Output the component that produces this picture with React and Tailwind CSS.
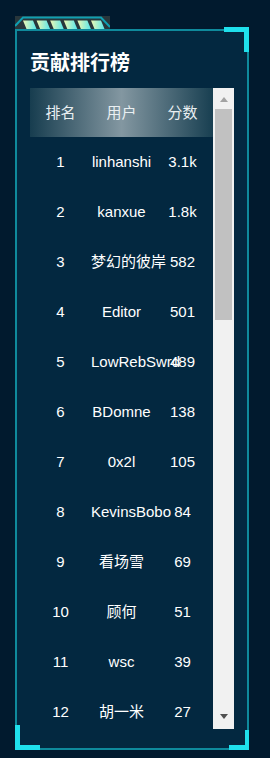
import React from 'react';

const rows = [
  { rank: 1, name: 'linhanshi', score: '3.1k' },
  { rank: 2, name: 'kanxue', score: '1.8k' },
  { rank: 3, name: '梦幻的彼岸', score: '582' },
  { rank: 4, name: 'Editor', score: '501' },
  { rank: 5, name: 'LowRebSwrd', score: '489' },
  { rank: 6, name: 'BDomne', score: '138' },
  { rank: 7, name: '0x2l', score: '105' },
  { rank: 8, name: 'KevinsBobo', score: '84' },
  { rank: 9, name: '看场雪', score: '69' },
  { rank: 10, name: '顾何', score: '51' },
  { rank: 11, name: 'wsc', score: '39' },
  { rank: 12, name: '胡一米', score: '27' },
];

// little striped tab sitting on top of the panel
const PanelTab = () => (
  <svg width="95" height="13" viewBox="0 0 95 13" className="block">
    <defs>
      <linearGradient id="tabStripes" x1="0" y1="0" x2="1" y2="0">
        <stop offset="0%" stopColor="#eef8b2" />
        <stop offset="100%" stopColor="#58e6ec" />
      </linearGradient>
    </defs>
    <rect x="0" y="0" width="95" height="13" fill="#28363b" />
    {[0, 1, 2, 3, 4, 5].map((k) => {
      const a = 8 + 13.6 * k;
      return (
        <polygon
          key={k}
          points={`${a},4.5 ${a + 10},4.5 ${a + 13.5},13 ${a + 3.5},13`}
          fill="url(#tabStripes)"
        />
      );
    })}
    <polyline points="0,10 8,1.5 86,1.5 95,11" fill="none" stroke="#0f9fb2" strokeWidth="2" />
  </svg>
);

const FakeScrollbar = () => (
  <div className="flex w-[21px] flex-col bg-[#f1f1f1]">
    <div className="flex h-[21px] items-end justify-center pb-[7px]">
      <div className="h-0 w-0 border-x-[4.5px] border-b-[5px] border-x-transparent border-b-[#a3a3a3]" />
    </div>
    <div className="flex-1 px-[2px]">
      <div className="h-[211px] bg-[#c1c1c1]" />
    </div>
    <div className="flex h-[20px] items-start justify-center pt-[5px]">
      <div className="h-0 w-0 border-x-[4.5px] border-t-[5px] border-x-transparent border-t-[#505050]" />
    </div>
  </div>
);

const App = () => {
  return (
    <div className="min-h-screen w-full bg-[#011a2e] pl-[15px] pt-[16px] font-['Liberation_Sans','Noto_Sans_CJK_SC',sans-serif]">
      <div className="w-[234px]">
        <PanelTab />

        <div className="relative flex h-[721px] flex-col border-2 border-[#0f8a9c] bg-[#032840] px-[13px] pt-[18px] pb-[19px]">
          <h2 className="text-[20px] leading-[28px] font-bold text-white">贡献排行榜</h2>

          <div className="mt-[11px] flex h-[641px]">
            <div className="w-[183px] overflow-hidden">
              <div className="grid h-[49px] grid-cols-3 items-center bg-[linear-gradient(90deg,#173d4f_0%,#8397a1_50%,#183f51_100%)] text-center text-[15px] leading-[20px] text-[#e9eff2]">
                <span>排名</span>
                <span>用户</span>
                <span>分数</span>
              </div>
              {rows.map((r) => (
                <div
                  key={r.rank}
                  className="grid h-[50px] grid-cols-3 items-center text-center text-[15px] leading-[20px] whitespace-nowrap text-white"
                >
                  <span>{r.rank}</span>
                  <span>{r.name}</span>
                  <span>{r.score}</span>
                </div>
              ))}
            </div>
            <FakeScrollbar />
          </div>

          {/* corner brackets */}
          <div className="absolute top-[-4px] right-[-2px] h-[25px] w-[25px] border-t-[5px] border-r-[5px] border-[#1fe0ec]" />
          <div className="absolute bottom-[-2px] left-[-2px] h-[25px] w-[25px] border-b-[5px] border-l-[5px] border-[#1fe0ec]" />
          <div className="absolute right-[-2px] bottom-[-2px] h-[20px] w-[20px] border-r-[4px] border-b-[5px] border-[#1fe0ec]" />
        </div>
      </div>
    </div>
  );
};

export default App;
